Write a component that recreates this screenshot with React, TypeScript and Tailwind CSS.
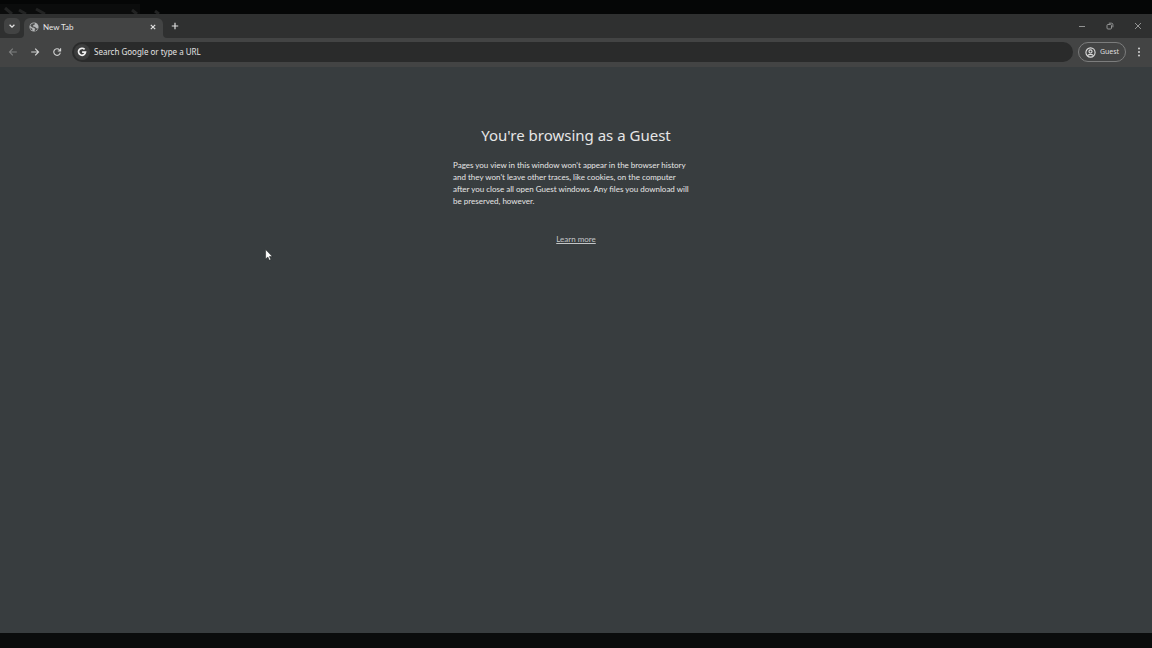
import React from "react";

function TabStrip() {
  return (
    <div className="flex h-6 items-stretch bg-[#2f3030] pl-1">
      <button
        type="button"
        aria-label="Search tabs"
        className="mt-1 flex h-4 w-4 items-center justify-center rounded-[5px] bg-[#424343] text-[#e0e0e0]"
      >
        <svg viewBox="0 0 8 8" className="h-2 w-2" fill="none" stroke="currentColor" strokeWidth="1.3">
          <path d="M1.6 2.8 4 5.2 6.4 2.8" />
        </svg>
      </button>
      <svg viewBox="0 0 4 4" className="h-1 w-1 self-end" fill="#434444" aria-hidden="true">
        <path d="M4 0V4H0Q4 4 4 0z" />
      </svg>
      <div className="mt-1 flex w-[139px] items-center rounded-t-md bg-[#434444] pb-[3px] pl-[5px] pr-[6px]">
        <svg viewBox="0 0 24 24" className="h-[10px] w-[10px] text-[#b4b6b7]" aria-hidden="true">
          <circle cx="12" cy="12" r="11" fill="currentColor" />
          <path
            fill="#4c4d4d"
            d="M14 3 14 6 10 8V11L15 12 17 15H21L20 18 15 22 13 20 15 17 12 14 8 13 3 9 6 5 10 3zM3 13 8 17V21L4 18z"
          />
        </svg>
        <span className="ml-1 flex-1 font-['Lato',sans-serif] text-[8px] leading-3 text-[#e6e6e6]">New Tab</span>
        <button type="button" aria-label="Close tab" className="flex h-2 w-2 items-center justify-center text-[#e0e0e0]">
          <svg viewBox="0 0 8 8" className="h-2 w-2" stroke="currentColor" strokeWidth="1.2">
            <path d="M1.800 1.800 6.200 6.200M6.200 1.800 1.800 6.200" />
          </svg>
        </button>
      </div>
      <svg viewBox="0 0 4 4" className="h-1 w-1 self-end" fill="#434444" aria-hidden="true">
        <path d="M0 0V4H4Q0 4 0 0z" />
      </svg>
      <button type="button" aria-label="New tab" className="mt-1 flex h-4 w-4 items-center justify-center text-[#dcdcdc]">
        <svg viewBox="0 0 8 8" className="h-2 w-2" stroke="currentColor" strokeWidth="1.2">
          <path d="M4 .8V7.200M.8 4H7.200" />
        </svg>
      </button>
      <div className="ml-auto flex items-center text-[#929393]">
        <button type="button" aria-label="Minimize" className="flex w-7 justify-center">
          <svg viewBox="0 0 8 8" className="h-2 w-2" stroke="currentColor">
            <path d="M1 4.500H7" />
          </svg>
        </button>
        <button type="button" aria-label="Restore" className="flex w-7 justify-center">
          <svg viewBox="0 0 8 8" className="h-2 w-2" fill="none" stroke="currentColor">
            <rect x="1" y="2.500" width="4.500" height="4.500" rx="1" />
            <path d="M2.800 1.200H5.500Q6.900 1.200 6.900 2.600V5.300" />
          </svg>
        </button>
        <button type="button" aria-label="Close window" className="flex w-7 justify-center">
          <svg viewBox="0 0 8 8" className="h-2 w-2" stroke="currentColor">
            <path d="M1 1 7 7M7 1 1 7" />
          </svg>
        </button>
      </div>
    </div>
  );
}

function Toolbar() {
  return (
    <div className="flex h-[29px] items-center bg-[#434444] px-2 pb-px">
      <div className="flex items-center gap-3">
        <button type="button" aria-label="Back" className="text-[#7f8080]">
          <svg viewBox="0 0 10 10" className="h-[10px] w-[10px]" fill="none" stroke="currentColor" strokeWidth="1.1">
            <path d="M8.800 5H1.600M4.800 1.700 1.500 5 4.800 8.300" />
          </svg>
        </button>
        <button type="button" aria-label="Forward" className="text-[#d2d3d3]">
          <svg viewBox="0 0 10 10" className="h-[10px] w-[10px]" fill="none" stroke="currentColor" strokeWidth="1.2">
            <path d="M1.200 5H8.400M5.200 1.700 8.500 5 5.200 8.300" />
          </svg>
        </button>
        <button type="button" aria-label="Reload" className="text-[#d2d3d3]">
          <svg viewBox="0 0 10 10" className="h-[10px] w-[10px]" fill="none" stroke="currentColor" strokeWidth="1.1">
            <path d="M8.300 5.600A3.300 3.300 0 1 1 7.500 2.800L8.500 3.800M8.600 1.200V4H5.800" />
          </svg>
        </button>
      </div>
      <div className="ml-[10px] flex h-5 flex-1 items-center rounded-full bg-[#2a2b2b] pl-[2px]">
        <span className="flex h-4 w-4 items-center justify-center rounded-full bg-[#3c3d3d]">
          <svg viewBox="0 0 10 10" className="h-[10px] w-[10px]" fill="none" stroke="#f2f2f2" strokeWidth="1.700" aria-hidden="true">
            <path d="M7.600 2.400A3.500 3.500 0 1 0 8.500 5.200H5.100" />
          </svg>
        </span>
        <input
          type="text"
          aria-label="Address and search bar"
          placeholder="Search Google or type a URL"
          className="ml-1 h-4 min-w-0 flex-1 bg-transparent text-[8px] leading-4 text-[#e2e2e2] outline-none placeholder:text-[#e2e2e2]"
        />
      </div>
      <button
        type="button"
        className="ml-[5px] flex h-5 w-12 items-center justify-center gap-1 rounded-full border border-[#7c7d7d] text-[7px] leading-3 text-[#dedede]"
      >
        <svg viewBox="0 0 12 12" className="h-[11px] w-[11px]" fill="none" stroke="currentColor" strokeWidth="1.200" aria-hidden="true">
          <circle cx="6" cy="6" r="5" />
          <circle cx="6" cy="4.800" r="1.700" />
          <path d="M2.600 9.400Q6 6.600 9.400 9.400" />
        </svg>
        Guest
      </button>
      <button type="button" aria-label="Menu" className="ml-2 text-[#d4d4d4]">
        <svg viewBox="0 0 10 10" className="h-[10px] w-[10px]" fill="currentColor">
          <circle cx="5" cy="1.500" r="1" />
          <circle cx="5" cy="5" r="1" />
          <circle cx="5" cy="8.500" r="1" />
        </svg>
      </button>
    </div>
  );
}

export default function App() {
  return (
    <div className="relative flex min-h-screen flex-col bg-[#0a0c0c] pb-[15px] font-['Noto_Sans','Open_Sans',sans-serif]">
      <div className="h-[14px] bg-[#050606]">
        <svg viewBox="0 0 170 14" className="h-[14px] w-[170px]" stroke="#222323" strokeWidth="3" aria-hidden="true">
          <rect width="140" height="10" y="4" fill="#0b0c0c" stroke="none" />
          <path d="M5 8 12 14M19 10 26 14M36 9 45 14M132 10 137 14M155 11 159 14" />
        </svg>
      </div>
      <header>
        <TabStrip />
        <Toolbar />
      </header>
      <main className="flex flex-1 flex-col items-center bg-[#383d3f] px-4 pt-14 text-[#e6e6e6]">
        <h1 className="text-[15px] leading-6">You're browsing as a Guest</h1>
        <p className="mt-3 w-[246px] whitespace-nowrap font-['Lato',sans-serif] text-[8px] leading-3">
          Pages you view in this window won't appear in the browser history
          <br />
          and they won't leave other traces, like cookies, on the computer
          <br />
          after you close all open Guest windows. Any files you download will
          <br />
          be preserved, however.
        </p>
        <a href="#learn-more" className="mt-[26px] font-['Lato',sans-serif] text-[8px] leading-3 text-[#c3c6c7] underline">
          Learn more
        </a>
      </main>
      <svg viewBox="0 0 8 12" className="absolute left-[265px] top-[249px] h-3 w-2" aria-hidden="true">
        <path
          d="M.6.6V10L2.900 8 4.300 11.300 5.800 10.600 4.400 7.500H7.300z"
          fill="#fff"
          stroke="#1d2021"
          strokeWidth=".5"
        />
      </svg>
    </div>
  );
}
